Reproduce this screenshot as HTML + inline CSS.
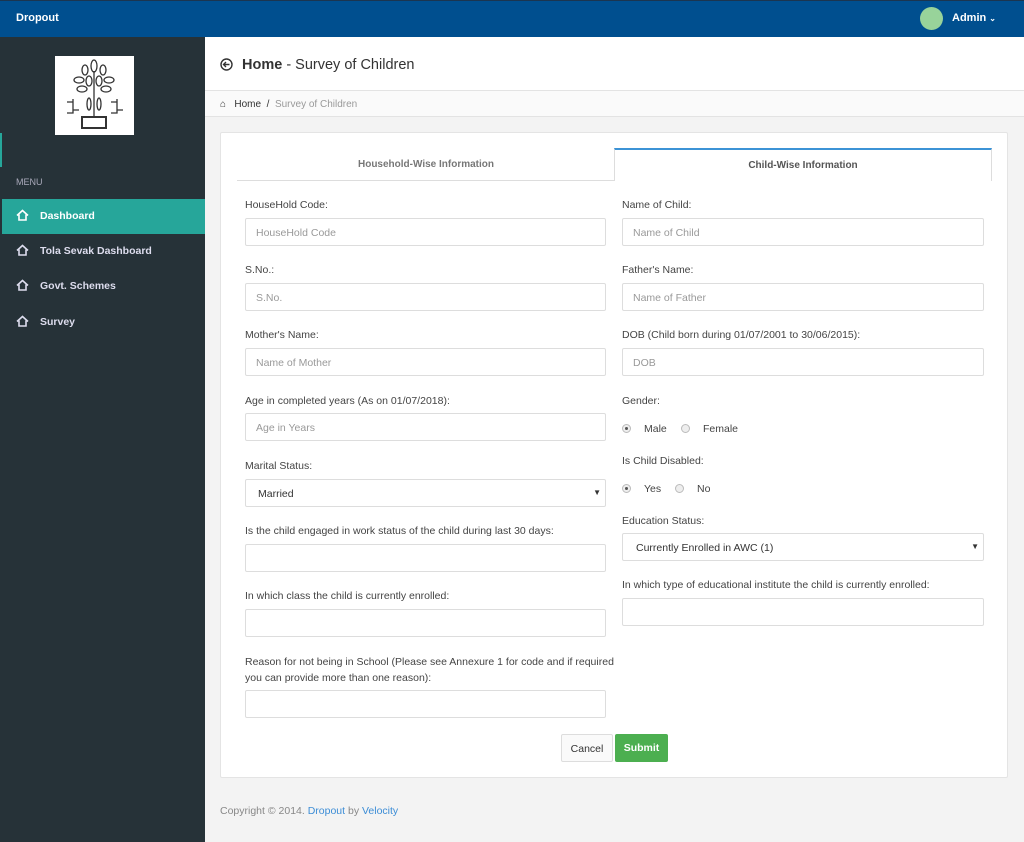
<!DOCTYPE html>
<html><head><meta charset="utf-8"><style>
*{box-sizing:border-box;margin:0;padding:0}
body{width:1024px;height:842px;overflow:hidden;font-family:"Liberation Sans",sans-serif;background:#f3f3f3;position:relative;font-size:11px;color:#444}
.a{position:absolute}
.top{left:0;top:0;width:1024px;height:37px;background:#004f8f;border-top:1px solid #1b3550}
.side{left:0;top:37px;width:205px;height:805px;background:#263238}
.lbl{position:absolute;font-size:10.5px;color:#444}
.inp{position:absolute;height:28px;border:1px solid #ddd;border-radius:2px;background:#fff;font-size:10.5px;color:#999;padding:8px 10px}
.menu{position:absolute;left:0;width:205px;height:35px;color:#dde;font-weight:bold;font-size:10.5px;padding:11px 0 0 40px}
.menu svg{position:absolute;left:16px;top:10px}
.rad{position:absolute;width:9px;height:9px;border-radius:50%;border:1px solid #bbb;background:#eee}
.rad.on::after{content:"";position:absolute;left:2px;top:2px;width:3px;height:3px;border-radius:50%;background:#555}
</style></head><body>
<div class="a top"></div>
<div class="a" style="left:16px;top:12px;color:#fff;font-weight:bold;font-size:11px">Dropout</div>
<div class="a" style="left:920px;top:7px;width:23px;height:23px;border-radius:50%;background:#98d39a"></div>
<div class="a" style="left:952px;top:12px;color:#fff;font-weight:bold;font-size:11px">Admin <span style="font-size:8px">&#8964;</span></div>
<div class="a side"></div>
<div class="a" style="left:55px;top:56px;width:79px;height:79px;background:#fff;text-align:center">
<svg width="79" height="79" viewBox="0 0 79 79" fill="none" stroke="#333" stroke-width="1.3"><line x1="39" y1="15" x2="39" y2="62"/><ellipse cx="39" cy="10" rx="3" ry="6"/><ellipse cx="30" cy="14" rx="3" ry="5"/><ellipse cx="48" cy="14" rx="3" ry="5"/><ellipse cx="24" cy="24" rx="5" ry="3"/><ellipse cx="54" cy="24" rx="5" ry="3"/><ellipse cx="27" cy="33" rx="5" ry="3"/><ellipse cx="51" cy="33" rx="5" ry="3"/><ellipse cx="34" cy="25" rx="3" ry="5"/><ellipse cx="44" cy="25" rx="3" ry="5"/><ellipse cx="34" cy="48" rx="2" ry="6"/><ellipse cx="44" cy="48" rx="2" ry="6"/><rect x="27" y="61" width="24" height="11" stroke-width="2"/><path d="M12 46h6v8h6M18 46v-3M18 54v3h-6" /><path d="M56 46h6v8h6M62 46v-3M62 54v3h-6"/></svg></div>
<div class="a" style="left:0;top:133px;width:2px;height:34px;background:#26a69a"></div>
<div class="a" style="left:16px;top:177px;color:#aab;font-size:9px">MENU</div>
<div class="menu" style="top:199px;background:#26a69a;color:#fff;left:2px;width:203px;padding-left:38px"><svg width="13" height="12" viewBox="0 0 13 12" fill="none" stroke="#fff" stroke-width="1.6" style="left:14px"><path d="M1 6.5L6.5 1.5 12 6.5M3 5.5v5.5h7V5.5"/></svg>Dashboard</div>
<div class="menu" style="top:234px"><svg width="13" height="12" viewBox="0 0 13 12" fill="none" stroke="#dde" stroke-width="1.6"><path d="M1 6.5L6.5 1.5 12 6.5M3 5.5v5.5h7V5.5"/></svg>Tola Sevak Dashboard</div>
<div class="menu" style="top:269px"><svg width="13" height="12" viewBox="0 0 13 12" fill="none" stroke="#dde" stroke-width="1.6"><path d="M1 6.5L6.5 1.5 12 6.5M3 5.5v5.5h7V5.5"/></svg>Govt. Schemes</div>
<div class="menu" style="top:305px"><svg width="13" height="12" viewBox="0 0 13 12" fill="none" stroke="#dde" stroke-width="1.6"><path d="M1 6.5L6.5 1.5 12 6.5M3 5.5v5.5h7V5.5"/></svg>Survey</div>

<div class="a" style="left:205px;top:37px;width:819px;height:54px;background:#fff;border-bottom:1px solid #e3e3e3"></div>
<svg class="a" style="left:220px;top:58px" width="13" height="13" viewBox="0 0 13 13" fill="none" stroke="#333" stroke-width="1.4"><circle cx="6.5" cy="6.5" r="5.5"/><path d="M9.5 6.5h-6M6 4L3.5 6.5 6 9"/></svg>
<div class="a" style="left:242px;top:57px;font-size:14.5px;color:#333"><b>Home</b> - Survey of Children</div>
<div class="a" style="left:205px;top:91px;width:819px;height:26px;background:#fafafa;border-bottom:1px solid #e3e3e3"></div>
<div class="a" style="left:220px;top:99px;font-size:10px;color:#333"><span style="font-size:10px">&#8962;</span>&nbsp;&nbsp; Home &nbsp;/&nbsp; <span style="color:#999">Survey of Children</span></div>

<div class="a" style="left:220px;top:132px;width:788px;height:646px;background:#fff;border:1px solid #e4e4e4;border-radius:2px"></div>
<div class="a" style="left:237px;top:180px;width:378px;height:1px;background:#ddd"></div>
<div class="a" style="left:237px;top:159px;width:378px;text-align:center;font-size:10px;color:#777;font-weight:bold">Household-Wise Information</div>
<div class="a" style="left:614px;top:148px;width:378px;height:33px;border:1px solid #ddd;border-top:2px solid #3c93d6;border-bottom:none;background:#fff;text-align:center;padding-top:10px;font-size:10px;font-weight:bold;color:#555">Child-Wise Information</div>

<div class="lbl" style="left:245px;top:199px">HouseHold Code:</div>
<div class="inp" style="left:245px;top:218px;width:361px">HouseHold Code</div>
<div class="lbl" style="left:245px;top:264px">S.No.:</div>
<div class="inp" style="left:245px;top:283px;width:361px">S.No.</div>
<div class="lbl" style="left:245px;top:329px">Mother's Name:</div>
<div class="inp" style="left:245px;top:348px;width:361px">Name of Mother</div>
<div class="lbl" style="left:245px;top:395px">Age in completed years (As on 01/07/2018):</div>
<div class="inp" style="left:245px;top:413px;width:361px">Age in Years</div>
<div class="lbl" style="left:245px;top:460px">Marital Status:</div>
<div class="inp" style="left:245px;top:479px;width:361px;color:#333;padding-left:12px">Married<span style="position:absolute;right:4px;font-size:8px">&#9660;</span></div>
<div class="lbl" style="left:245px;top:525px">Is the child engaged in work status of the child during last 30 days:</div>
<div class="inp" style="left:245px;top:544px;width:361px"></div>
<div class="lbl" style="left:245px;top:590px">In which class the child is currently enrolled:</div>
<div class="inp" style="left:245px;top:609px;width:361px"></div>
<div class="lbl" style="left:245px;top:654px;line-height:16px;width:370px">Reason for not being in School (Please see Annexure 1 for code and if required you can provide more than one reason):</div>
<div class="inp" style="left:245px;top:690px;width:361px"></div>

<div class="lbl" style="left:622px;top:199px">Name of Child:</div>
<div class="inp" style="left:622px;top:218px;width:362px">Name of Child</div>
<div class="lbl" style="left:622px;top:264px">Father's Name:</div>
<div class="inp" style="left:622px;top:283px;width:362px">Name of Father</div>
<div class="lbl" style="left:622px;top:329px">DOB (Child born during 01/07/2001 to 30/06/2015):</div>
<div class="inp" style="left:622px;top:348px;width:362px">DOB</div>
<div class="lbl" style="left:622px;top:395px">Gender:</div>
<div class="rad on" style="left:622px;top:424px"></div><div class="lbl" style="left:644px;top:423px">Male</div>
<div class="rad" style="left:681px;top:424px"></div><div class="lbl" style="left:703px;top:423px">Female</div>
<div class="lbl" style="left:622px;top:455px">Is Child Disabled:</div>
<div class="rad on" style="left:622px;top:484px"></div><div class="lbl" style="left:644px;top:483px">Yes</div>
<div class="rad" style="left:675px;top:484px"></div><div class="lbl" style="left:697px;top:483px">No</div>
<div class="lbl" style="left:622px;top:515px">Education Status:</div>
<div class="inp" style="left:622px;top:533px;width:362px;color:#333;padding-left:13px">Currently Enrolled in AWC (1)<span style="position:absolute;right:4px;font-size:8px">&#9660;</span></div>
<div class="lbl" style="left:622px;top:579px">In which type of educational institute the child is currently enrolled:</div>
<div class="inp" style="left:622px;top:598px;width:362px"></div>

<div class="a" style="left:561px;top:734px;width:52px;height:28px;border:1px solid #ddd;border-radius:2px;background:#fafafa;text-align:center;padding-top:8px;font-size:10.5px;color:#333">Cancel</div>
<div class="a" style="left:615px;top:734px;width:53px;height:28px;border-radius:2px;background:#4caf50;text-align:center;padding-top:8px;font-size:10.5px;color:#fff;font-weight:bold">Submit</div>

<div class="a" style="left:220px;top:805px;font-size:10.5px;color:#888">Copyright © 2014. <span style="color:#3c8dd6">Dropout</span> by <span style="color:#3c8dd6">Velocity</span></div>
</body></html>
